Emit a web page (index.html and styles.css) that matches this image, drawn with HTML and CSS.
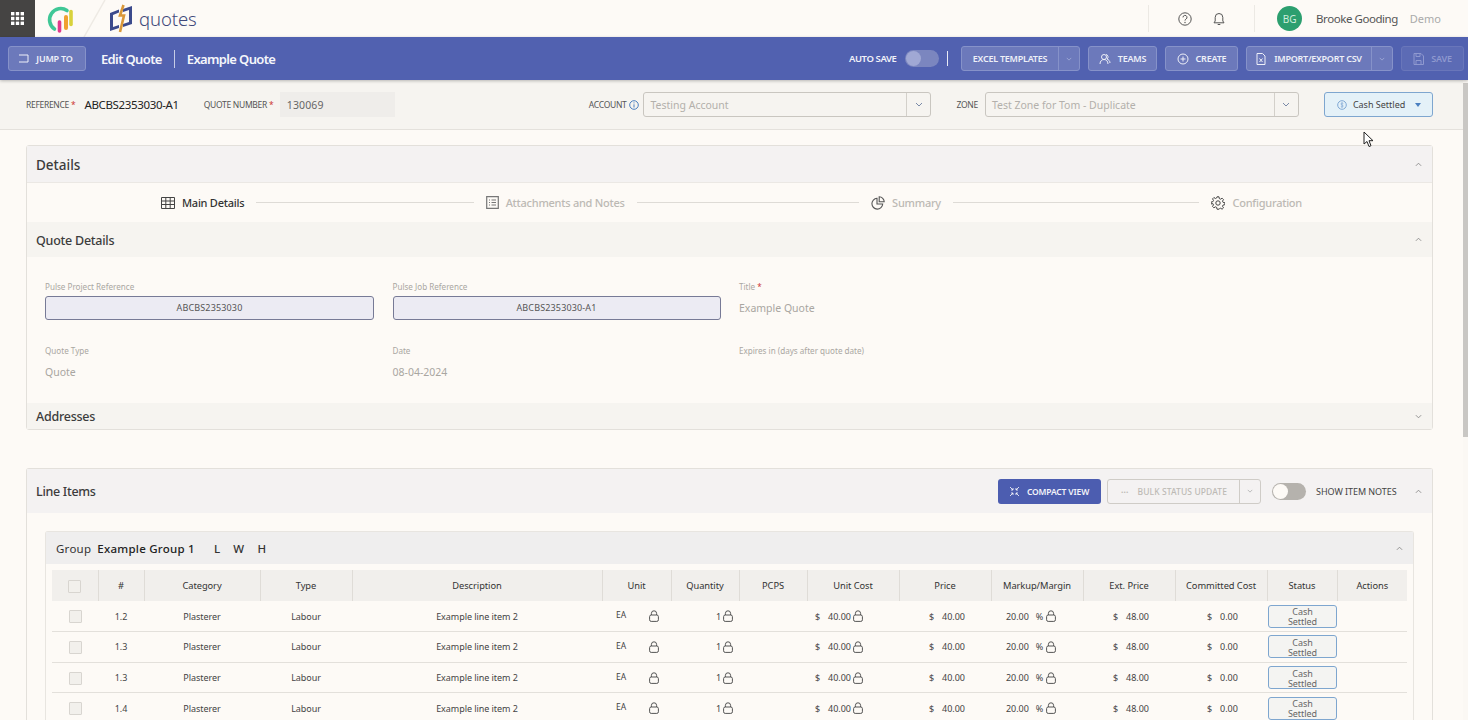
FILE: index.html
```html
<!DOCTYPE html>
<html lang="en">
<head>
<meta charset="utf-8">
<title>Edit Quote</title>
<link rel="stylesheet" href="styles.css">
</head>
<body>
<svg class="defs" width="0" height="0" aria-hidden="true">
  <symbol id="lock" viewBox="0 0 10 12"><path d="M2.4 5V3.4a2.6 2.6 0 0 1 5.2 0V5" fill="none" stroke="currentColor" stroke-width="1"/><rect x=".6" y="5" width="8.8" height="6.4" rx="1.6" fill="none" stroke="currentColor" stroke-width="1"/></symbol>
  <symbol id="chev" viewBox="0 0 8 5"><path d="M1 1l3 3 3-3" fill="none" stroke="currentColor" stroke-width="1"/></symbol>
  <symbol id="chevup" viewBox="0 0 8 5"><path d="M1 4l3-3 3 3" fill="none" stroke="currentColor" stroke-width="1"/></symbol>
</svg>

<header class="topbar">
  <div class="apps">
    <svg width="13" height="13" viewBox="0 0 13 13" fill="#fff"><rect width="3.4" height="3.4"/><rect x="4.8" width="3.4" height="3.4"/><rect x="9.6" width="3.4" height="3.4"/><rect y="4.8" width="3.4" height="3.4"/><rect x="4.8" y="4.8" width="3.4" height="3.4"/><rect x="9.6" y="4.8" width="3.4" height="3.4"/><rect y="9.6" width="3.4" height="3.4"/><rect x="4.8" y="9.6" width="3.4" height="3.4"/><rect x="9.6" y="9.6" width="3.4" height="3.4"/></svg>
  </div>
  <svg class="pulse" width="28" height="30" viewBox="0 0 28 30">
    <path d="M8.500 25A11 11 0 1 1 21 6.500" fill="none" stroke="#3fc796" stroke-width="3.600" stroke-linecap="round"/>
    <path d="M13.500 18v9" stroke="#e03a8c" stroke-width="3.600" stroke-linecap="round"/>
    <path d="M20 13v11" stroke="#f0a030" stroke-width="4" stroke-linecap="round"/>
    <path d="M25 7.500v13" stroke="#d8d23c" stroke-width="3.600" stroke-linecap="round"/>
  </svg>
  <svg class="slash" width="24" height="37" viewBox="0 0 24 37"><path d="M1 37L22 0" stroke="#eeeae4" stroke-width="1.500"/></svg>
  <svg class="qlogo" width="23" height="29" viewBox="0 0 23 29">
    <path d="M0 9l9-3.500v3L3 11v12l6-2v3l-9 3z" fill="#3b4a8c"/>
    <path d="M13 5l9-3v18l-9 3v-3l6-2V6l-6 2z" fill="#3b4a8c"/>
    <path d="M13.500 1L10 11.500h4L10 28" fill="none" stroke="#d9983a" stroke-width="2.600"/>
  </svg>
  <span class="qword">quotes</span>
  <div class="top-right">
    <span class="vline"></span>
    <svg class="ic-help" width="14" height="14" viewBox="0 0 14 14"><circle cx="7" cy="7" r="6.200" fill="none" stroke="#555" stroke-width="1"/><path d="M5 5.400a2 2 0 1 1 3 1.700c-.7.400-1 .8-1 1.500" fill="none" stroke="#555"/><circle cx="7" cy="10.500" r=".7" fill="#555"/></svg>
    <svg class="ic-bell" width="12" height="14" viewBox="0 0 12 14"><path d="M6 1.500a3.800 3.800 0 0 0-3.800 3.800V9L1 10.800h10L9.800 9V5.300A3.800 3.800 0 0 0 6 1.500zM4.700 12.500h2.600" fill="none" stroke="#555"/></svg>
    <span class="vline vline-b"></span>
    <span class="avatar">BG</span>
    <span class="uname">Brooke Gooding</span>
    <span class="urole">Demo</span>
  </div>
</header>

<div class="bluebar">
  <button class="bbtn jump"><svg width="11" height="9" viewBox="0 0 11 9"><path d="M3 1h7v7H1M3 1L1 1" fill="none" stroke="currentColor"/></svg>JUMP TO</button>
  <span class="crumb crumb-a">Edit Quote</span>
  <span class="crumb-sep"></span>
  <span class="crumb">Example Quote</span>
  <div class="bar-actions">
    <span class="autosave">AUTO SAVE</span>
    <span class="tog-blue"><span class="knob-blue"></span></span>
    <span class="bar-sep"></span>
    <div class="bsplit excel"><span class="bmain">EXCEL TEMPLATES</span><span class="barrow"><svg width="6" height="4"><use href="#chev"/></svg></span></div>
    <button class="bbtn teams"><svg width="12" height="12" viewBox="0 0 12 12"><circle cx="5" cy="4" r="2.500" fill="none" stroke="currentColor"/><path d="M1 11c0-3 2-4.500 4-4.500S9 8 9 11M7 1.500a2.500 2.500 0 0 1 1 4.500c1.500.5 3 2 3 4" fill="none" stroke="currentColor"/></svg>TEAMS</button>
    <button class="bbtn create"><svg width="12" height="12" viewBox="0 0 12 12"><circle cx="6" cy="6" r="5" fill="none" stroke="currentColor"/><path d="M6 3.500v5M3.500 6h5" stroke="currentColor"/></svg>CREATE</button>
    <div class="bsplit import"><span class="bmain"><svg width="10" height="12" viewBox="0 0 10 12"><path d="M1 .5h5.500L9 3v8.500H1zM3.500 5.500l3 3.500M6.500 5.500l-3 3.500" fill="none" stroke="currentColor"/></svg>IMPORT/EXPORT CSV</span><span class="barrow"><svg width="6" height="4"><use href="#chev"/></svg></span></div>
    <button class="bbtn save"><svg width="11" height="12" viewBox="0 0 11 12"><path d="M1 .5h7l2.500 2.500v8.500H1zM3 .5v3h4v-3M3 11.500v-4h5v4" fill="none" stroke="currentColor"/></svg>SAVE</button>
  </div>
</div>

<div class="shell">
  <main class="content">
    <div class="refbar">
      <span class="rlabel rl-ref">REFERENCE<i>*</i></span>
      <span class="refval">ABCBS2353030-A1</span>
      <span class="rlabel rl-num">QUOTE NUMBER<i>*</i></span>
      <span class="numbox">130069</span>
      <span class="rlabel rl-acc">ACCOUNT</span>
      <svg class="info" width="10" height="10" viewBox="0 0 10 10"><circle cx="5" cy="5" r="4.300" fill="none" stroke="#4a7fc0"/><path d="M5 4.300V7.500M5 2.400v1" stroke="#4a7fc0"/></svg>
      <div class="sel sel-acc"><span class="sel-text">Testing Account</span><span class="sel-arrow"><svg width="8" height="5"><use href="#chev"/></svg></span></div>
      <span class="rlabel rl-zone">ZONE</span>
      <div class="sel sel-zone"><span class="sel-text">Test Zone for Tom - Duplicate</span><span class="sel-arrow"><svg width="8" height="5"><use href="#chev"/></svg></span></div>
      <button class="cash"><svg width="10" height="10" viewBox="0 0 10 10"><circle cx="5" cy="5" r="4.300" fill="none" stroke="#7fa8d4"/><path d="M6.300 3.500C5.500 2.800 3.800 3 3.800 4s2.500 1 2.500 2-1.700 1.200-2.500.5M5 2.200v5.600" fill="none" stroke="#7fa8d4" stroke-width=".7"/></svg>Cash Settled<span class="caret"></span></button>
    </div>

    <section class="card card-details">
      <div class="card-head head-details"><h2>Details</h2><svg class="up" width="7" height="5"><use href="#chevup"/></svg></div>
      <div class="stepper">
        <span class="step active"><svg width="14" height="12" viewBox="0 0 14 12"><path d="M.5.500h13v11H.5zM.5 4h13M.5 7.500h13M4.800.5v11M9.200.5v11" fill="none" stroke="#444"/></svg>Main Details</span>
        <span class="step-line l1"></span>
        <span class="step"><svg width="13" height="13" viewBox="0 0 13 13"><path d="M.7.700h11.600v11.600H.7z" fill="none" stroke="#777" stroke-width="1.200"/><path d="M3 4h1M3 6.500h1M3 9h1M5.500 4H10M5.500 6.500H10M5.500 9H10" stroke="#777"/></svg>Attachments and Notes</span>
        <span class="step-line l2"></span>
        <span class="step"><svg width="14" height="14" viewBox="0 0 14 14"><path d="M6 2.300a5.400 5.400 0 1 0 5.700 5.700H6z" fill="none" stroke="#555" stroke-width="1.100"/><path d="M8.200.8a5 5 0 0 1 5 5h-5z" fill="none" stroke="#555" stroke-width="1.100"/></svg>Summary</span>
        <span class="step-line l3"></span>
        <span class="step"><svg width="14" height="14" viewBox="0 0 14 14"><circle cx="7" cy="7" r="2.200" fill="none" stroke="#444"/><path d="M6 .8h2l.3 1.800 1.300.6 1.500-1 1.400 1.400-1 1.500.6 1.300 1.800.3v2l-1.800.3-.6 1.300 1 1.500-1.400 1.400-1.500-1-1.300.6L8 13.200H6l-.3-1.800-1.300-.6-1.500 1-1.400-1.400 1-1.500-.6-1.300L.1 8V6l1.800-.3.6-1.300-1-1.500 1.400-1.400 1.500 1 1.300-.6z" fill="none" stroke="#444"/></svg>Configuration</span>
      </div>
      <div class="card-head head-sub"><h3>Quote Details</h3><svg class="up" width="7" height="5"><use href="#chevup"/></svg></div>
      <div class="fields">
        <div class="field"><label>Pulse Project Reference</label><div class="ro">ABCBS2353030</div></div>
        <div class="field"><label>Pulse Job Reference</label><div class="ro">ABCBS2353030-A1</div></div>
        <div class="field"><label>Title<i>*</i></label><div class="val-plain">Example Quote</div></div>
        <div class="field"><label>Quote Type</label><div class="val-plain">Quote</div></div>
        <div class="field"><label>Date</label><div class="val-plain">08-04-2024</div></div>
        <div class="field"><label>Expires in (days after quote date)</label></div>
      </div>
      <div class="card-head head-addr"><h3>Addresses</h3><svg class="up" width="7" height="5"><use href="#chev"/></svg></div>
    </section>

    <section class="card card-lines">
      <div class="card-head head-lines">
        <h2>Line Items</h2>
        <div class="line-tools">
          <button class="compact"><svg width="9" height="9" viewBox="0 0 9 9"><path d="M0 0l3 3M9 0L6 3M0 9l3-3M9 9L6 6M3 1v2H1M6 1v2h2M3 8V6H1M6 8V6h2" fill="none" stroke="#fff" stroke-width=".8"/></svg>COMPACT VIEW</button>
          <div class="bulk"><span class="bulk-main"><span class="dots">···</span>BULK STATUS UPDATE</span><span class="bulk-arrow"><svg width="6" height="4"><use href="#chev"/></svg></span></div>
          <span class="tog"><span class="knob"></span></span>
          <span class="notes">SHOW ITEM NOTES</span>
          <svg class="up" width="7" height="5"><use href="#chevup"/></svg>
        </div>
      </div>
      <div class="body-lines">
        <div class="group">
          <div class="group-head">
            <span class="gtitle">Group</span><strong>Example Group 1</strong><span class="dim dim-l">L</span><span class="dim">W</span><span class="dim">H</span>
            <svg class="up" width="7" height="5"><use href="#chevup"/></svg>
          </div>
          <table class="items">
            <colgroup><col class="w46"><col class="w46"><col class="w116"><col class="w92"><col class="w250"><col class="w69"><col class="w68"><col class="w68"><col class="w92"><col class="w92"><col class="w92"><col class="w92"><col class="w92"><col class="w70"><col class="w70"></colgroup>
            <thead><tr><th><span class="cb"></span></th><th>#</th><th>Category</th><th>Type</th><th>Description</th><th>Unit</th><th>Quantity</th><th>PCPS</th><th>Unit Cost</th><th>Price</th><th>Markup/Margin</th><th>Ext. Price</th><th>Committed Cost</th><th>Status</th><th>Actions</th></tr></thead>
            <tbody>
              <tr><td><span class="cb"></span></td><td>1.2</td><td>Plasterer</td><td>Labour</td><td>Example line item 2</td><td><div class="v v-unit"><span class="ea">EA</span><svg class="lock"><use href="#lock"/></svg></div></td><td><div class="v v-qty">1<svg class="lock"><use href="#lock"/></svg></div></td><td></td><td><div class="v v-cost"><span class="cur">$</span>40.00<svg class="lock"><use href="#lock"/></svg></div></td><td><div class="v v-price"><span class="cur">$</span>40.00</div></td><td><div class="v v-mk">20.00<span class="pct">%</span><svg class="lock"><use href="#lock"/></svg></div></td><td><div class="v v-ext"><span class="cur">$</span>48.00</div></td><td><div class="v v-com"><span class="cur">$</span>0.00</div></td><td><span class="status">Cash Settled</span></td><td></td></tr>
              <tr><td><span class="cb"></span></td><td>1.3</td><td>Plasterer</td><td>Labour</td><td>Example line item 2</td><td><div class="v v-unit"><span class="ea">EA</span><svg class="lock"><use href="#lock"/></svg></div></td><td><div class="v v-qty">1<svg class="lock"><use href="#lock"/></svg></div></td><td></td><td><div class="v v-cost"><span class="cur">$</span>40.00<svg class="lock"><use href="#lock"/></svg></div></td><td><div class="v v-price"><span class="cur">$</span>40.00</div></td><td><div class="v v-mk">20.00<span class="pct">%</span><svg class="lock"><use href="#lock"/></svg></div></td><td><div class="v v-ext"><span class="cur">$</span>48.00</div></td><td><div class="v v-com"><span class="cur">$</span>0.00</div></td><td><span class="status">Cash Settled</span></td><td></td></tr>
              <tr><td><span class="cb"></span></td><td>1.3</td><td>Plasterer</td><td>Labour</td><td>Example line item 2</td><td><div class="v v-unit"><span class="ea">EA</span><svg class="lock"><use href="#lock"/></svg></div></td><td><div class="v v-qty">1<svg class="lock"><use href="#lock"/></svg></div></td><td></td><td><div class="v v-cost"><span class="cur">$</span>40.00<svg class="lock"><use href="#lock"/></svg></div></td><td><div class="v v-price"><span class="cur">$</span>40.00</div></td><td><div class="v v-mk">20.00<span class="pct">%</span><svg class="lock"><use href="#lock"/></svg></div></td><td><div class="v v-ext"><span class="cur">$</span>48.00</div></td><td><div class="v v-com"><span class="cur">$</span>0.00</div></td><td><span class="status">Cash Settled</span></td><td></td></tr>
              <tr><td><span class="cb"></span></td><td>1.4</td><td>Plasterer</td><td>Labour</td><td>Example line item 2</td><td><div class="v v-unit"><span class="ea">EA</span><svg class="lock"><use href="#lock"/></svg></div></td><td><div class="v v-qty">1<svg class="lock"><use href="#lock"/></svg></div></td><td></td><td><div class="v v-cost"><span class="cur">$</span>40.00<svg class="lock"><use href="#lock"/></svg></div></td><td><div class="v v-price"><span class="cur">$</span>40.00</div></td><td><div class="v v-mk">20.00<span class="pct">%</span><svg class="lock"><use href="#lock"/></svg></div></td><td><div class="v v-ext"><span class="cur">$</span>48.00</div></td><td><div class="v v-com"><span class="cur">$</span>0.00</div></td><td><span class="status">Cash Settled</span></td><td></td></tr>
            </tbody>
          </table>
        </div>
      </div>
    </section>
  </main>
  <div class="scroll"><span class="thumb"></span></div>
</div>

<svg class="cursor" width="11" height="17" viewBox="0 0 11 17"><path d="M1 1v12l3-2.500 2 5 2-.8-2-5h4z" fill="#fff" stroke="#222" stroke-width="1"/></svg>
</body>
</html>
```
FILE: styles.css
```css
* { box-sizing: border-box; }
html, body { margin: 0; height: 720px; overflow: hidden; }
body {
  width: 1468px;
  background: #fdfaf6;
  color: #444;
  font-family: "Noto Sans", "Open Sans", sans-serif;
  font-size: 11px;
}
.defs { position: absolute; }
button { font-family: inherit; cursor: default; }
h2, h3 { margin: 0; font-weight: 500; color: #3c3c3c; }

/* top bar */
.topbar { height: 37px; display: flex; align-items: center; background: #fdfaf6; }
.apps { width: 35px; height: 37px; background: #454443; display: flex; align-items: center; justify-content: center; }
.pulse { margin-left: 11px; margin-top: 1px; }
.slash { margin-left: 9px; }
.qlogo { margin-left: 3px; }
.qword { margin-left: 6px; font-size: 18.500px; line-height: 37px; color: #41497a; font-weight: 300; letter-spacing: -.1px; }
.top-right { margin-left: auto; display: flex; align-items: center; padding-right: 27px; }
.vline { width: 1px; height: 27px; background: #ece9e4; }
.ic-help { margin-left: 29px; }
.ic-bell { margin-left: 21px; }
.vline-b { margin-left: 29px; }
.avatar { margin-left: 22px; width: 25px; height: 25px; border-radius: 50%; background: #2c9f6f; color: #cfeedd; font-size: 10px; display: flex; align-items: center; justify-content: center; }
.uname { margin-left: 14px; font-size: 11.500px; color: #555; letter-spacing: -.45px; }
.urole { margin-left: 12px; font-size: 11px; color: #aaa; }

/* blue bar */
.bluebar { height: 43px; background: #5161b0; display: flex; align-items: center; padding: 0 4px 0 8px; box-shadow: 0 1px 3px rgba(0,0,0,.25); position: relative; }
.bbtn { height: 25px; border: 1px solid #8692c9; border-radius: 3px; background: #6c79bb; color: #eef0f8; font-size: 9px; font-weight: 600; display: flex; align-items: center; justify-content: center; gap: 7px; padding: 0; letter-spacing: -.2px; }
.jump { width: 78px; gap: 7px; padding-right: 3px; }
.crumb { color: #f5f6fb; font-size: 13px; font-weight: 600; letter-spacing: -.64px; }
.crumb-a { margin-left: 15px; }
.crumb-sep { width: 1px; height: 18px; background: #c6cce6; margin: 0 12px; }
.bar-actions { margin-left: auto; display: flex; align-items: center; }
.autosave { color: #f1f2f9; font-size: 9.500px; font-weight: 600; letter-spacing: -.4px; }
.tog-blue { margin-left: 8px; width: 34px; height: 17px; border-radius: 9px; background: #7b86bf; display: flex; align-items: center; padding-left: 1px; }
.knob-blue { width: 15px; height: 15px; border-radius: 50%; background: #a0a8d4; }
.bar-sep { width: 1.500px; height: 15px; background: #e8eaf5; margin: 0 13px 0 8px; }
.bsplit { height: 25px; border: 1px solid #8692c9; border-radius: 3px; background: #6c79bb; color: #eef0f8; font-size: 9px; font-weight: 600; display: flex; align-items: stretch; letter-spacing: -.25px; }
.bmain { display: flex; align-items: center; justify-content: center; gap: 8px; flex: 1; }
.barrow { width: 21px; border-left: 1px solid #8692c9; display: flex; align-items: center; justify-content: center; color: #aab2da; }
.excel { width: 119px; }
.teams { width: 69px; margin-left: 8px; }
.create { width: 73px; margin-left: 8px; }
.import { width: 147px; margin-left: 8px; }
.save { width: 63px; margin-left: 8px; background: #5c6bb5; border-color: #6976ba; color: #8f99cf; }

/* shell */
.shell { display: flex; height: 640px; }
.content { width: 1463px; flex: none; overflow: hidden; }
.scroll { width: 5px; padding-top: 3px; background: #fbf8f4; }
.thumb { display: block; height: 354px; background: #c9c7c4; }

/* reference bar */
.refbar { height: 50px; background: #f6f4f0; border-bottom: 1px solid #e4e1dc; display: flex; align-items: center; padding-left: 26px; }
.rlabel { font-size: 8.500px; color: #555; letter-spacing: -.3px; }
.rlabel i, .field i { color: #c33; font-style: normal; margin-left: 2px; }
.refval { margin-left: 9px; font-size: 11.500px; color: #222; letter-spacing: -.35px; }
.rl-num { margin-left: 25px; }
.numbox { margin-left: 6.500px; width: 115px; height: 25px; background: #efedea; color: #666; font-size: 10.500px; letter-spacing: .1px; display: flex; align-items: center; padding-left: 7px; }
.rl-acc { margin-left: 194px; }
.info { margin-left: 3px; }
.sel { height: 25px; margin-left: 4px; border: 1px solid #c9c6c0; border-radius: 3px; display: flex; align-items: stretch; }
.sel-text { flex: 1; display: flex; align-items: center; padding-left: 6px; color: #b3b0ab; font-size: 10.500px; }
.sel-arrow { width: 24px; border-left: 1px solid #d3d0ca; display: flex; align-items: center; justify-content: center; color: #7a8aa8; }
.sel-acc { width: 288px; }
.rl-zone { margin-left: 25px; }
.sel-zone { width: 314px; margin-left: 7px; }
.cash { margin-left: 25px; width: 109px; height: 25px; background: #e4f1f8; border: 1px solid #7ea6cf; border-radius: 3px; display: flex; align-items: center; padding: 0 0 0 12px; color: #444; font-size: 9px; gap: 6px; }
.caret { width: 0; height: 0; border: 3.500px solid transparent; border-top: 4px solid #4a7fc0; border-bottom: 0; margin-left: 4px; }

/* cards */
.card { width: 1407px; margin-left: 26px; border: 1px solid #e3e0db; border-radius: 3px; }
.card-details { margin-top: 15px; height: 285px; }
.card-lines { margin-top: 38px; height: 400px; border-bottom: 0; }
.card-head { display: flex; align-items: center; padding: 0 10px 0 9px; justify-content: space-between; }
.up { color: #888; flex: none; }
.head-details { height: 37px; background: #f4f2f2; border-bottom: 1px solid #ebe8e4; }
.head-details h2 { font-size: 13.500px; padding-top: 2px; }
.head-sub { height: 35px; background: #f6f4f0; }
.head-sub h3 { font-size: 12.500px; letter-spacing: -.25px; padding-top: 2px; }
.head-addr h3 { font-size: 12.500px; letter-spacing: -.25px; }
.head-addr { height: 26px; background: #f6f4f0; }
.head-lines { height: 44px; background: #f4f2f2; }
.head-lines h2 { font-size: 12.500px; letter-spacing: -.3px; }

/* stepper */
.stepper { height: 39px; display: flex; align-items: center; padding: 0 130px 0 134px; gap: 12px; }
.step { display: flex; align-items: center; gap: 7px; color: #bcb9b4; font-size: 11px; font-weight: 500; letter-spacing: -.25px; white-space: nowrap; }
.step.active { color: #333; }
.step-line { height: 1px; background: #dedbd6; }
.l1 { flex: 216; }
.l2 { flex: 221; }
.l3 { flex: 245; }

/* fields */
.fields { height: 146px; padding: 23px 0 0 18px; display: grid; grid-template-columns: 329px 328px 1fr; column-gap: 18.500px; grid-auto-rows: 64px; }
.field label { display: block; font-size: 8.100px; color: #aaa7a2; line-height: 14px; }
.ro { height: 24px; margin-top: 2px; background: #ecebf3; border: 1px solid #777a96; border-radius: 3px; text-align: center; line-height: 22px; font-size: 9px; color: #555; letter-spacing: .15px; }
.val-plain { margin-top: 7px; color: #a9a6a1; font-size: 10.500px; }

/* line items */
.line-tools { display: flex; align-items: center; }
.compact { width: 103px; height: 25px; border: 0; border-radius: 3px; background: #4c5db0; color: #f3f4fa; font-size: 8.500px; font-weight: 600; display: flex; align-items: center; justify-content: center; gap: 8px; letter-spacing: -.15px; }
.bulk { margin-left: 6px; width: 154px; height: 25px; border: 1px solid #cfccc7; border-radius: 3px; display: flex; color: #bdbab5; font-size: 8.500px; letter-spacing: .1px; }
.bulk-main { flex: 1; display: flex; align-items: center; padding-left: 13px; gap: 9px; font-weight: 500; }
.dots { font-weight: 700; }
.bulk-arrow { width: 21px; border-left: 1px solid #cfccc7; display: flex; align-items: center; justify-content: center; color: #aaa; }
.tog { margin-left: 11px; width: 34px; height: 17px; border-radius: 9px; background: #b5b2ad; display: flex; align-items: center; padding-left: 1px; }
.knob { width: 15px; height: 15px; border-radius: 50%; background: #fdfaf6; }
.notes { margin-left: 10px; width: 83px; font-size: 9px; color: #444; letter-spacing: -.05px; white-space: nowrap; }
.notes + .up { margin-left: 16px; }
.body-lines { padding: 18px 18px 0; }
.group { border: 1px solid #e8e5e0; border-bottom: 0; border-radius: 3px 3px 0 0; }
.group-head { height: 32px; background: #efeeee; display: flex; align-items: center; padding-left: 10px; font-size: 11.500px; color: #333; letter-spacing: .25px; }
.group-head strong { margin-left: 6px; font-weight: 500; color: #222; }
.dim { margin-left: 13px; color: #333; font-weight: 500; }
.dim-l { margin-left: 19px; }
.group-head .up { margin-left: auto; margin-right: 10px; }

/* table */
.items { margin: 6px 0 0 6px; width: 1355px; border-collapse: collapse; table-layout: fixed; color: #444; font-size: 9px; }
.w46 { width: 46px; } .w116 { width: 116px; } .w92 { width: 92px; } .w250 { width: 250px; } .w69 { width: 69px; } .w68 { width: 68px; } .w70 { width: 70px; }
.items th { height: 31px; padding: 0; background: #f1efec; font-weight: 400; border-right: 1.500px solid #dfdcd7; color: #333; font-size: 9.300px; letter-spacing: -.05px; }
.items th:last-child { border-right: 0; }
.items td { height: 30.670px; padding: 0; text-align: center; border-bottom: 1px solid #e3e0db; letter-spacing: -.05px; white-space: nowrap; }
.cb { display: inline-block; vertical-align: middle; width: 13px; height: 13px; background: #f2f0ec; border: 1px solid #d8d5d0; border-radius: 1px; }
.v { display: flex; align-items: center; height: 29.670px; }
.lock { width: 10px; height: 12px; color: #555; flex: none; }
.ea { font-size: 8.500px; margin-top: -3px; }
.v-unit { padding-left: 14px; gap: 23px; }
.v-qty { padding-left: 45px; gap: 2px; }
.v-cost { padding-left: 8px; }
.v-cost .lock { margin-left: 2px; }
.cur { margin-right: 8px; }
.v-price { padding-left: 30px; }
.v-mk { padding-left: 15px; }
.pct { margin: 0 3px 0 7px; }
.v-ext { padding-left: 30px; }
.v-com { padding-left: 32px; }
.status { display: flex; align-items: center; justify-content: center; width: 69px; height: 23px; margin-left: 1px; padding: 2px 14px 0; background: #f4f4f2; border: 1px solid #7ea6cf; border-radius: 3px; white-space: normal; line-height: 10px; color: #666; font-size: 9px; }

/* decorative pointer captured in the screenshot */
.cursor { position: absolute; left: 1363px; top: 131px; }
```
